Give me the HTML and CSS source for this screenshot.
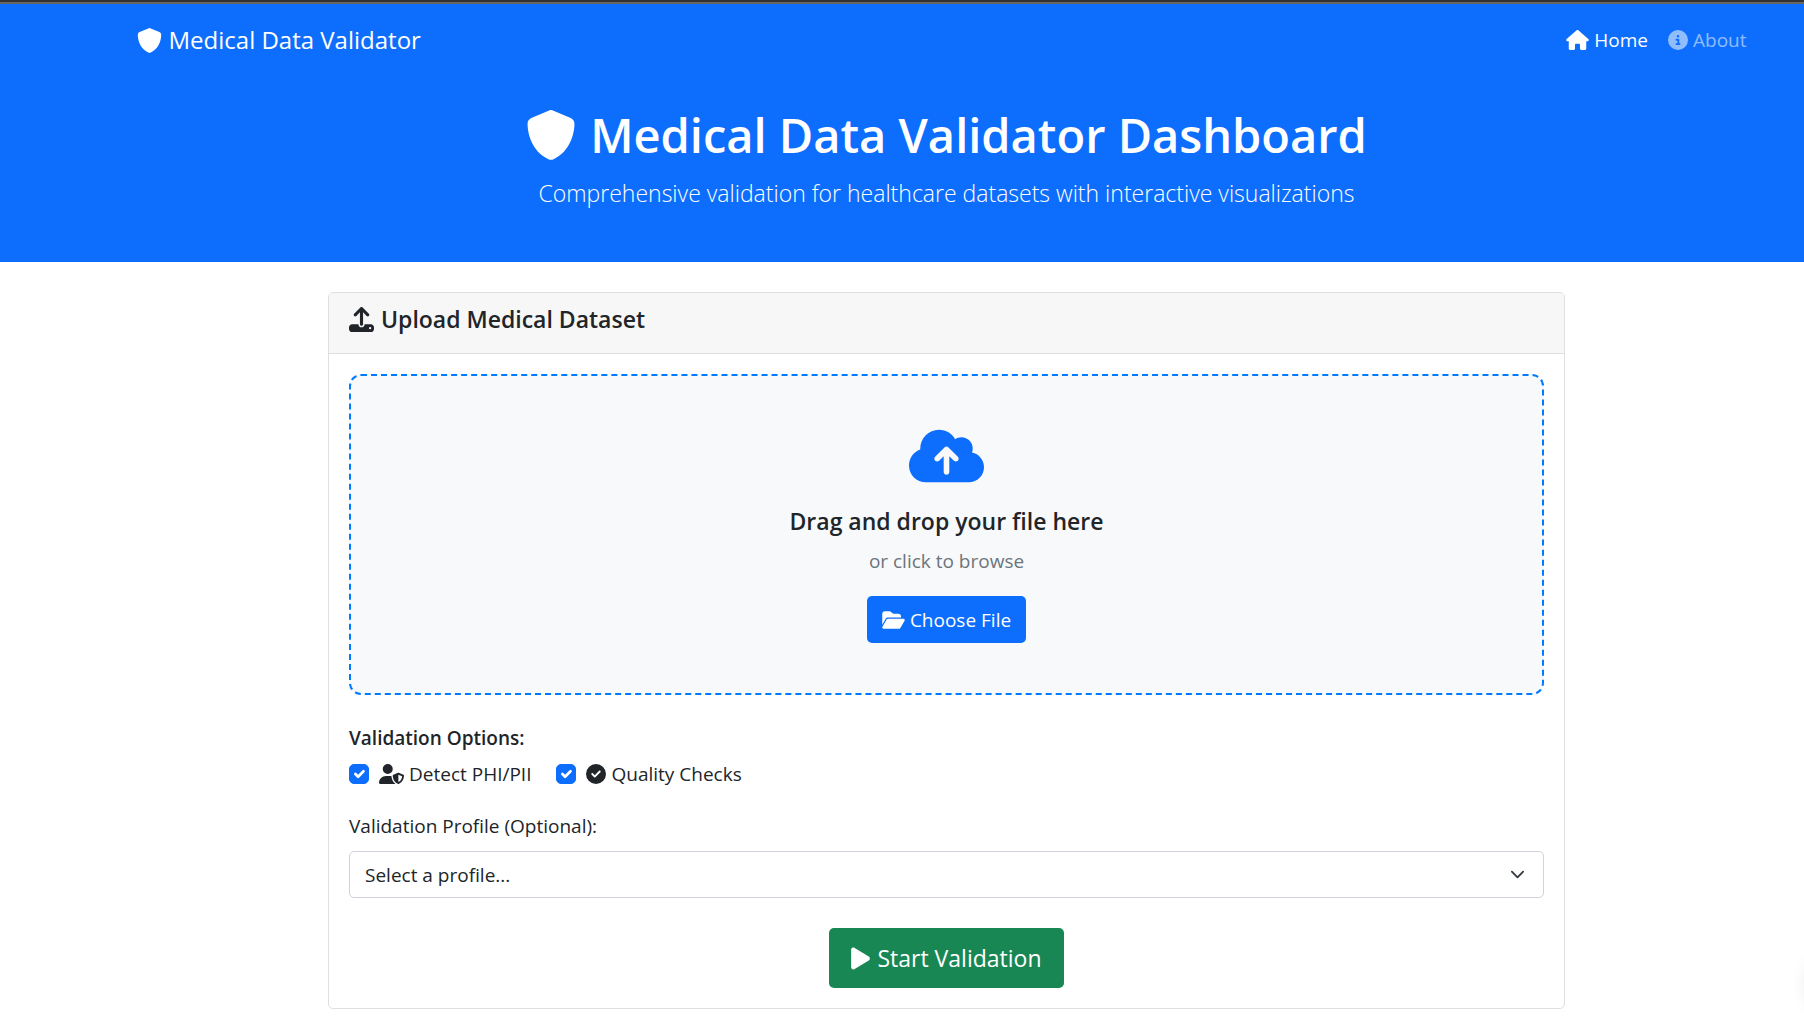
FILE: index.html
```html
<!DOCTYPE html>
<html lang="en">
<head>
<meta charset="utf-8">
<meta name="viewport" content="width=device-width, initial-scale=1">
<title>Medical Data Validator</title>
<link rel="stylesheet" href="styles.css">
</head>
<body>
<header class="masthead">
  <nav class="navbar container">
    <a class="brand" href="#">
      <svg class="icon icon-lg" viewBox="0 0 512 512" aria-hidden="true"><path d="M256 0c4.600 0 9.200 1 13.400 2.900L457.700 82.800c22 9.300 38.400 31 38.300 57.200c-.5 99.200-41.300 280.700-213.600 363.200c-16.700 8-36.100 8-52.800 0C57.300 420.700 16.500 239.200 16 140c-.1-26.200 16.300-47.900 38.300-57.200L242.700 2.900C246.800 1 251.400 0 256 0z"/></svg>
      <span>Medical Data Validator</span>
    </a>
    <div class="nav-links">
      <a class="nav-link active" href="#">
        <svg class="icon icon-wide" viewBox="0 0 576 512" aria-hidden="true"><path d="M575.8 255.500c0 18-15 32.100-32 32.100h-32l.7 160.200c0 2.700-.2 5.400-.5 8.100V472c0 22.100-17.900 40-40 40H456c-1.100 0-2.200 0-3.300-.1c-1.400 .1-2.800 .1-4.200 .1H416 392c-22.100 0-40-17.900-40-40V448 384c0-17.700-14.300-32-32-32H256c-17.700 0-32 14.300-32 32v64 24c0 22.100-17.900 40-40 40H160 128.100c-1.500 0-3-.1-4.500-.2c-1.200 .1-2.400 .2-3.600 .2H104c-22.100 0-40-17.900-40-40V360c0-.9 0-1.900 .1-2.800V287.600H32c-18 0-32-14-32-32.100c0-9 3-17 10-24L266.400 8c7-7 15-8 22-8s15 2 21 7L564.800 231.500c8 7 12 15 11 24z"/></svg>
        <span>Home</span>
      </a>
      <a class="nav-link" href="#">
        <svg class="icon" viewBox="0 0 512 512" aria-hidden="true"><path d="M256 512A256 256 0 1 0 256 0a256 256 0 1 0 0 512zM216 336h24V272H216c-13.300 0-24-10.700-24-24s10.700-24 24-24h48c13.300 0 24 10.700 24 24v88h8c13.300 0 24 10.700 24 24s-10.700 24-24 24H216c-13.300 0-24-10.700-24-24s10.700-24 24-24zm40-208a32 32 0 1 1 0 64 32 32 0 1 1 0-64z"/></svg>
        <span>About</span>
      </a>
    </div>
  </nav>
  <div class="hero">
    <h1>
      <svg class="icon icon-hero" viewBox="0 0 512 512" aria-hidden="true"><path d="M256 0c4.600 0 9.200 1 13.400 2.900L457.700 82.800c22 9.300 38.400 31 38.300 57.200c-.5 99.200-41.300 280.700-213.600 363.200c-16.700 8-36.100 8-52.800 0C57.300 420.700 16.500 239.200 16 140c-.1-26.200 16.300-47.900 38.300-57.200L242.700 2.900C246.800 1 251.400 0 256 0z"/></svg>
      <span>Medical Data Validator Dashboard</span>
    </h1>
    <p class="lead">Comprehensive validation for healthcare datasets with interactive visualizations</p>
  </div>
</header>

<main class="page">
  <form class="card">
    <div class="card-header">
      <h2>
        <svg class="icon icon-lg" viewBox="0 0 512 512" aria-hidden="true"><path d="M288 109.300V352c0 17.700-14.300 32-32 32s-32-14.300-32-32V109.300l-73.400 73.400c-12.500 12.500-32.800 12.500-45.300 0s-12.500-32.800 0-45.300l128-128c12.500-12.500 32.800-12.500 45.300 0l128 128c12.500 12.500 12.500 32.800 0 45.300s-32.800 12.500-45.300 0L288 109.300zM64 352H192c0 35.300 28.700 64 64 64s64-28.700 64-64H448c35.300 0 64 28.700 64 64v32c0 35.300-28.700 64-64 64H64c-35.300 0-64-28.700-64-64V416c0-35.300 28.700-64 64-64zM432 456a24 24 0 1 0 0-48 24 24 0 1 0 0 48z"/></svg>
        <span>Upload Medical Dataset</span>
      </h2>
    </div>
    <div class="card-body">
      <div class="dropzone">
        <svg class="icon icon-cloud" viewBox="0 0 640 512" aria-hidden="true"><path d="M144 480C64.500 480 0 415.500 0 336c0-62.800 40.200-116.200 96.200-135.900c-.1-2.700-.2-5.400-.2-8.100c0-88.400 71.600-160 160-160c59.300 0 111 32.200 138.700 80.200C409.900 102 428.300 96 448 96c53 0 96 43 96 96c0 12.200-2.300 23.800-6.400 34.600C596 238.400 640 290.100 640 352c0 70.700-57.300 128-128 128H144zm79-217c-9.400 9.400-9.400 24.600 0 33.900s24.600 9.400 33.900 0l39-39V392c0 13.300 10.700 24 24 24s24-10.700 24-24V257.900l39 39c9.400 9.400 24.600 9.400 33.900 0s9.400-24.600 0-33.900l-80-80c-9.400-9.400-24.600-9.400-33.900 0l-80 80z"/></svg>
        <h3>Drag and drop your file here</h3>
        <p class="hint">or click to browse</p>
        <button class="btn btn-primary" type="button">
          <svg class="icon icon-wide" viewBox="0 0 576 512" aria-hidden="true"><path d="M88.700 223.800L0 375.800V96C0 60.700 28.700 32 64 32H181.500c17 0 33.300 6.700 45.300 18.700l26.500 26.500c12 12 28.300 18.700 45.300 18.700H416c35.300 0 64 28.700 64 64v32H144c-22.800 0-43.800 12.100-55.300 31.800zm27.600 16.100C122.100 230 132.600 224 144 224H544c11.500 0 22 6.100 27.700 16.100s5.700 22.200-.1 32.100l-112 192C453.900 474 443.400 480 432 480H32c-11.500 0-22-6.100-27.700-16.100s-5.700-22.200 .1-32.100l112-192z"/></svg>
          <span>Choose File</span>
        </button>
      </div>

      <fieldset class="options">
        <legend>Validation Options:</legend>
        <div class="checks">
          <div class="check">
            <input type="checkbox" id="phi" checked>
            <label for="phi">
              <svg class="icon icon-user" viewBox="0 0 640 512" aria-hidden="true"><path d="M224 256A128 128 0 1 0 224 0a128 128 0 1 0 0 256zm-45.700 48C79.800 304 0 383.800 0 482.300C0 498.700 13.300 512 29.700 512H418.300c1.800 0 3.500-.2 5.300-.5c-76.300-55.100-99.800-141-103.100-200.200c-16.100-4.800-33.100-7.300-50.700-7.300H178.300zm308.800-78.300l-120 48C358 277.400 352 286.200 352 296c0 63.300 25.900 168.800 134.800 214.200c5.900 2.500 12.600 2.500 18.500 0C614.100 464.800 640 359.300 640 296c0-9.800-6-18.600-15.100-22.300l-120-48c-5.700-2.300-12.100-2.300-17.800 0zM591.400 312c-3.900 50.700-27.200 116.700-95.400 149.700V273.800L591.400 312z"/></svg>
              <span>Detect PHI/PII</span>
            </label>
          </div>
          <div class="check">
            <input type="checkbox" id="quality" checked>
            <label for="quality">
              <svg class="icon" viewBox="0 0 512 512" aria-hidden="true"><path d="M256 512A256 256 0 1 0 256 0a256 256 0 1 0 0 512zM369 209L241 337c-9.400 9.400-24.600 9.400-33.900 0l-64-64c-9.400-9.400-9.400-24.600 0-33.900s24.600-9.400 33.900 0l47 47L335 175c9.400-9.400 24.600-9.400 33.900 0s9.400 24.600 0 33.900z"/></svg>
              <span>Quality Checks</span>
            </label>
          </div>
        </div>
      </fieldset>

      <label class="profile-label" for="profile">Validation Profile (Optional):</label>
      <select class="profile" id="profile">
        <option>Select a profile...</option>
      </select>

      <button class="btn btn-success" type="submit">
        <svg class="icon icon-play" viewBox="0 0 384 512" aria-hidden="true"><path d="M73 39c-14.800-9.100-33.400-9.400-48.500-.9S0 62.600 0 80V432c0 17.400 9.400 33.400 24.500 41.900s33.700 8.100 48.500-.9L361 297c14.300-8.700 23-24.200 23-41s-8.700-32.200-23-41L73 39z"/></svg>
        <span>Start Validation</span>
      </button>
    </div>
  </form>
</main>
</body>
</html>
```
FILE: styles.css
```css
:root {
  --blue: #0d6efd;
  --green: #198754;
  --ink: #212529;
  --gutter: 89px;
}

* {
  box-sizing: border-box;
}

body {
  margin: 0;
  background: #fff;
  color: var(--ink);
  font-family: "Open Sans", "Noto Sans", sans-serif;
  font-size: 19px;
  line-height: 30px;
}

h1, h2, h3, p {
  margin: 0;
}

a {
  color: inherit;
  text-decoration: none;
}

.icon {
  flex: none;
  width: 20px;
  height: 20px;
  fill: currentColor;
}

.icon-wide { width: 23px; }
.icon-user { width: 25px; }
.icon-lg { width: 25px; height: 25px; }
.icon-play { width: 19px; height: 25px; }
.icon-hero { width: 50px; height: 50px; }
.icon-cloud { width: 75px; height: 60px; color: var(--blue); }

/* Header */
.masthead {
  padding-left: var(--gutter);
  border-top: 2px solid #333;
  background: var(--blue);
  box-shadow: inset 0 2px #666;
  color: #fff;
}

.container {
  max-width: 1650px;
  margin: 0 auto;
  padding: 0 15px;
}

.navbar {
  display: flex;
  align-items: center;
  justify-content: space-between;
  height: 76px;
}

.brand,
.nav-link {
  display: flex;
  align-items: center;
  gap: 5px;
}

.brand {
  gap: 7px;
  font-size: 24px;
}

.nav-links {
  display: flex;
  gap: 20px;
  padding-right: 10px;
}

.nav-link {
  color: rgba(255, 255, 255, 0.55);
}

.nav-link.active {
  color: #fff;
}

.hero {
  padding: 27px 15px 50px;
  text-align: center;
}

h1 {
  display: flex;
  align-items: center;
  justify-content: center;
  gap: 14px;
  font-size: 47px;
  font-weight: 600;
  line-height: 60px;
}

.lead {
  margin-top: 9px;
  font-size: 23px;
  font-weight: 300;
  line-height: 38px;
}

/* Upload card */
.page {
  padding: 30px 0 20px var(--gutter);
}

.card {
  max-width: 1237px;
  margin: 0 auto;
  border: 1px solid #dfdfdf;
  border-radius: 5px;
}

.card-header {
  padding: 11px 20px 19px;
  border-bottom: 1px solid #dfdfdf;
  border-radius: 4px 4px 0 0;
  background: #f7f7f7;
}

h2,
h3 {
  font-size: 23px;
  font-weight: 600;
}

h2 {
  display: flex;
  align-items: center;
  gap: 7px;
}

.card-body {
  display: flex;
  flex-direction: column;
  padding: 20px;
}

.dropzone {
  display: flex;
  flex-direction: column;
  align-items: center;
  padding: 50px 20px;
  border: 2px dashed #007bff;
  border-radius: 12px;
  background: #f8f9fa;
}

.dropzone h3 {
  margin: 20px 0 10px;
}

.hint {
  margin-bottom: 20px;
  color: #6c757d;
}

.btn {
  display: flex;
  align-items: center;
  gap: 5px;
  border: 0;
  border-radius: 5px;
  color: #fff;
  font: inherit;
}

.btn-primary {
  height: 47px;
  padding: 0 15px;
  background: var(--blue);
}

.btn-success {
  align-self: center;
  gap: 7px;
  height: 60px;
  margin-top: 30px;
  padding: 0 22px;
  background: var(--green);
  font-size: 23px;
}

.options {
  min-width: 0;
  margin: 28px 0 0;
  padding: 0;
  border: 0;
}

.options legend {
  padding: 0;
  font-weight: 600;
}

.checks {
  display: flex;
  gap: 25px;
  padding-top: 6px;
}

.check,
.check label {
  display: flex;
  align-items: center;
}

.check { gap: 10px; }
.check label { gap: 5px; }

.check input {
  appearance: none;
  width: 20px;
  height: 20px;
  margin: 0;
  border-radius: 5px;
  border: 1px solid #bfbfbf;
}

.check input:checked {
  border-color: var(--blue);
  background: var(--blue) url("data:image/svg+xml,%3Csvg xmlns='http://www.w3.org/2000/svg' viewBox='0 0 20 20'%3E%3Cpath fill='none' stroke='%23fff' stroke-linecap='round' stroke-linejoin='round' stroke-width='3' d='m6 10 3 3 6-6'/%3E%3C/svg%3E") center / contain;
}

.profile-label {
  margin: 22px 0 10px;
}

.profile {
  appearance: none;
  width: 100%;
  height: 47px;
  padding: 0 45px 0 15px;
  border: 1px solid #ced4da;
  border-radius: 5px;
  background: #fff url("data:image/svg+xml,%3Csvg xmlns='http://www.w3.org/2000/svg' viewBox='0 0 16 16'%3E%3Cpath fill='none' stroke='%23343a40' stroke-linecap='round' stroke-linejoin='round' stroke-width='2' d='m2 5 6 6 6-6'/%3E%3C/svg%3E") no-repeat right 18px center / 15px 15px;
  color: var(--ink);
  font: inherit;
}

body::after {
  content: "";
  position: fixed;
  right: -62px;
  bottom: 18px;
  width: 56px;
  height: 56px;
  border-radius: 50%;
  box-shadow: 0 0 20px rgba(0, 0, 0, 0.16);
}
```
